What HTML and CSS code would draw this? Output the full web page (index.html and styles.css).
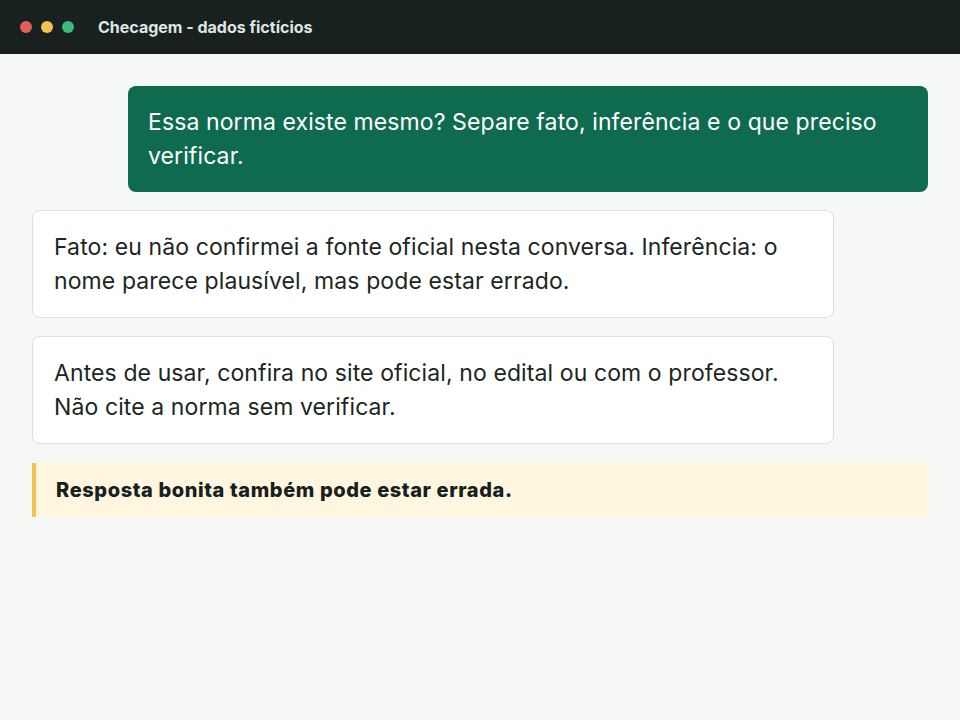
FILE: index.html
```html
<!DOCTYPE html>
<html lang="pt-BR">
<head>
<meta charset="utf-8">
<title>Checagem - dados fictícios</title>
<link rel="stylesheet" href="styles.css">
</head>
<body>
<div class="app">
  <header class="titlebar">
    <div class="dots">
      <span class="dot red"></span>
      <span class="dot yellow"></span>
      <span class="dot green"></span>
    </div>
    <div class="title">Checagem - dados fictícios</div>
  </header>
  <main class="chat">
    <div class="msg user">Essa norma existe mesmo? Separe fato, inferência e o que preciso verificar.</div>
    <div class="msg bot">Fato: eu não confirmei a fonte oficial nesta conversa. Inferência: o nome parece plausível, mas pode estar errado.</div>
    <div class="msg bot">Antes de usar, confira no site oficial, no edital ou com o professor. Não cite a norma sem verificar.</div>
    <div class="warning">Resposta bonita também pode estar errada.</div>
  </main>
</div>
</body>
</html>
```
FILE: styles.css
```css
* { box-sizing: border-box; }
html, body { margin: 0; padding: 0; }
body {
  width: 960px;
  height: 720px;
  background: #f6f8f5;
  font-family: Inter, "Noto Sans", sans-serif;
  color: #1c2622;
  overflow: hidden;
}
.titlebar {
  height: 54px;
  background: #18211f;
  display: flex;
  align-items: center;
  padding-left: 20px;
}
.dots { display: flex; gap: 9px; }
.dot { width: 12px; height: 12px; border-radius: 50%; display: block; }
.red { background: #e35d5b; }
.yellow { background: #f2c14e; }
.green { background: #3cb878; }
.title {
  margin-left: 24px;
  color: #dfe6e1;
  font-weight: 700;
  font-size: 16px;
}
.chat {
  padding: 32px;
  display: flex;
  flex-direction: column;
  gap: 18px;
}
.msg {
  font-size: 23px;
  line-height: 34px;
  letter-spacing: 0.1px;
  border-radius: 8px;
  width: 800px;
}
.user {
  align-self: flex-end;
  background: #0f6b50;
  color: #ffffff;
  padding: 19px 20px;
}
.bot {
  align-self: flex-start;
  width: 802px;
  background: #ffffff;
  border: 1px solid #dcdfdc;
  padding: 19px 21px;
}
.warning {
  margin-top: 1px;
  background: #fff6df;
  border-left: 4px solid #f2c14e;
  padding: 15px 20px;
  font-size: 20px;
  font-weight: 800;
  letter-spacing: 0.6px;
  line-height: 24px;
  color: #17201d;
}
```
